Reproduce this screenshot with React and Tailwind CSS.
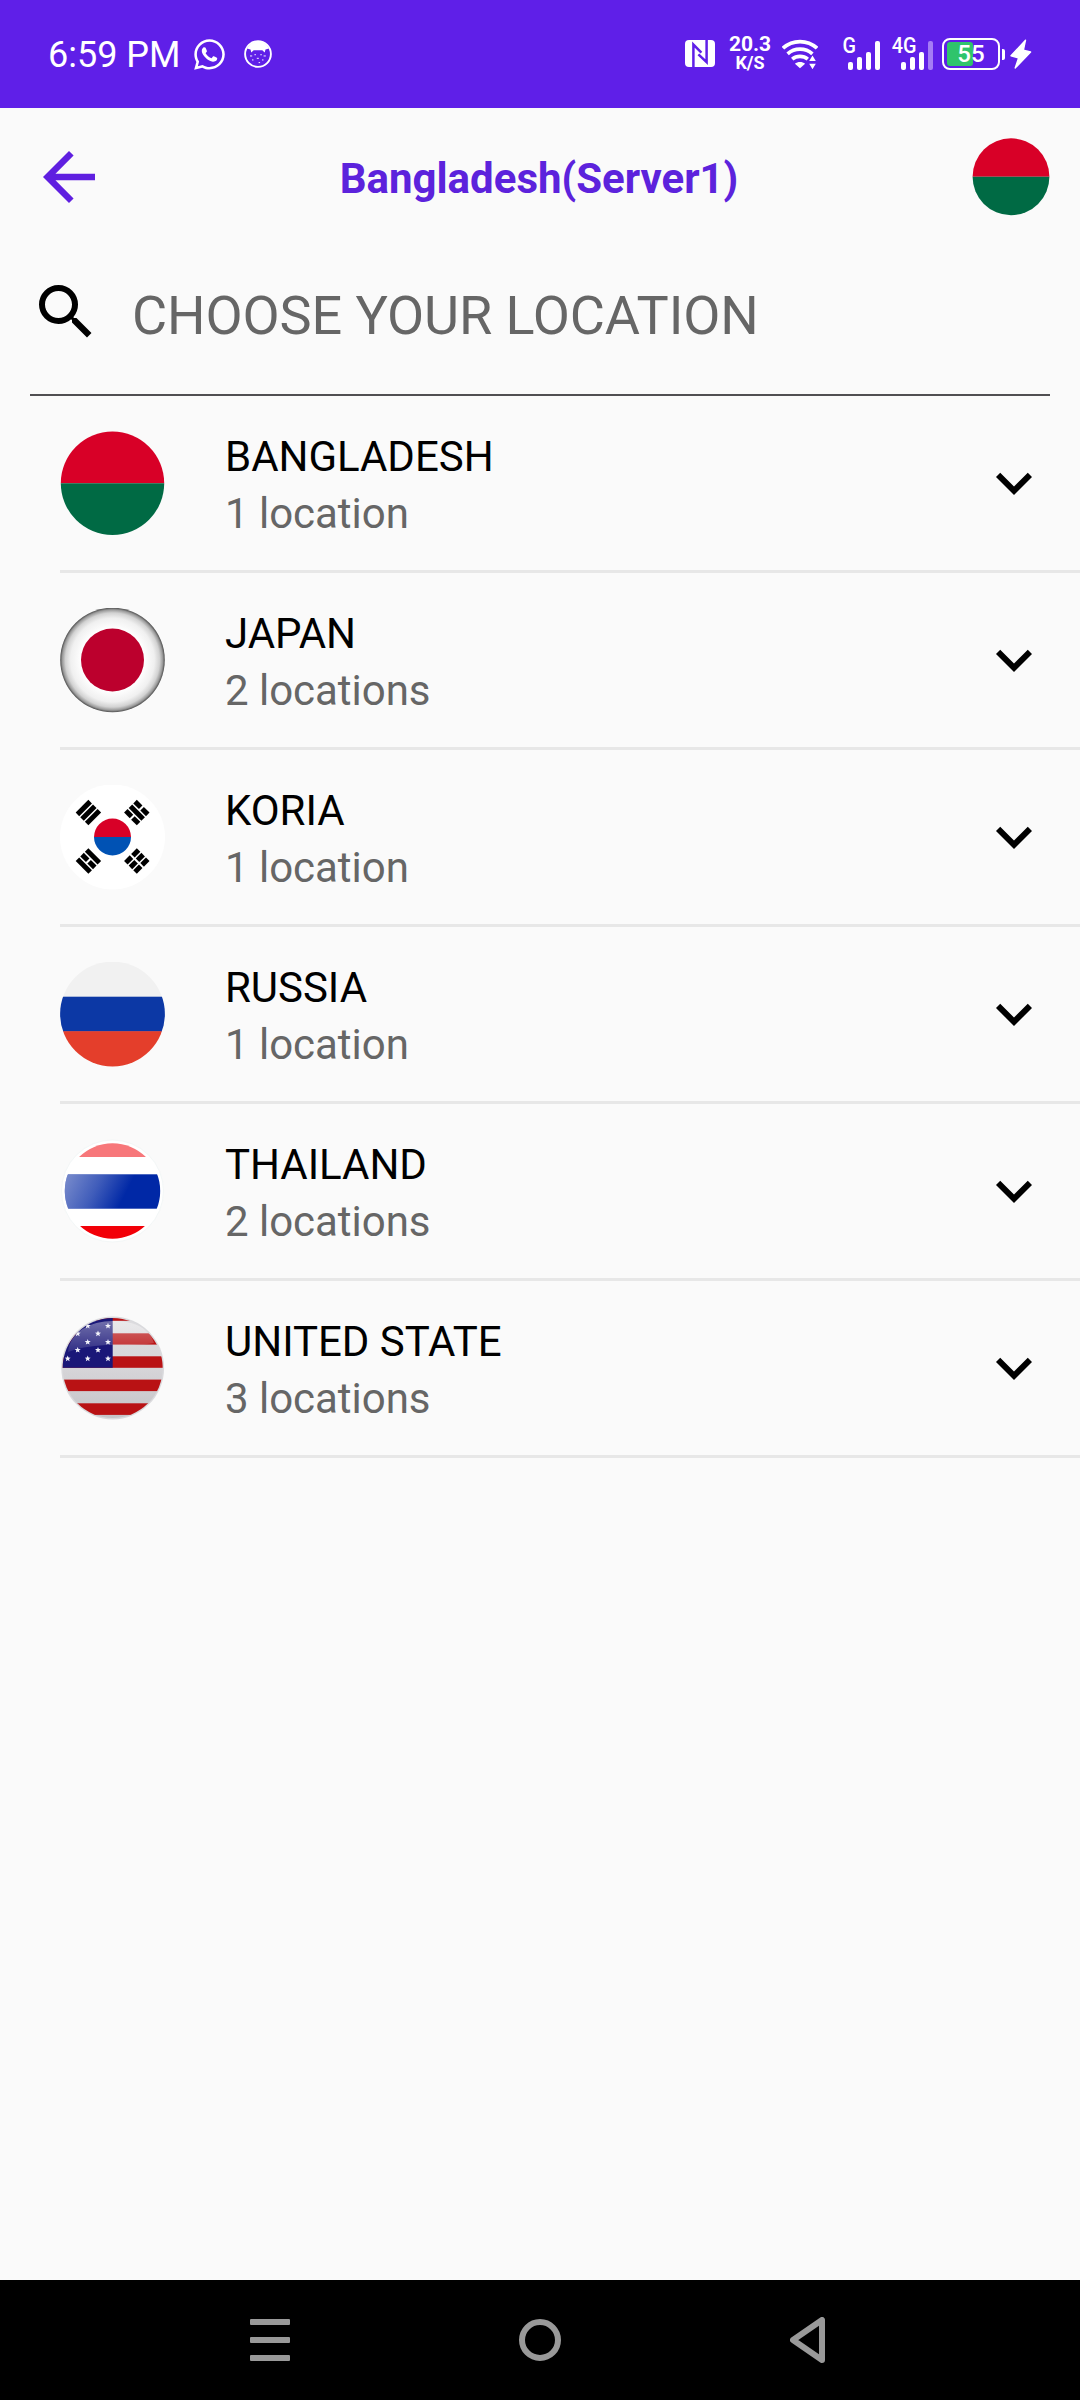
import { useState } from "react";
import { FaWhatsapp } from "react-icons/fa";
import { MdArrowBack, MdExpandMore, MdSearch } from "react-icons/md";

const servers = [
  { id: 1, country: "BANGLADESH", count: 1, Flag: BangladeshFlag },
  { id: 2, country: "JAPAN", count: 2, Flag: JapanFlag },
  { id: 3, country: "KORIA", count: 1, Flag: KoreaFlag },
  { id: 4, country: "RUSSIA", count: 1, Flag: RussiaFlag },
  { id: 5, country: "THAILAND", count: 2, Flag: ThailandFlag },
  { id: 6, country: "UNITED STATE", count: 3, Flag: UsaFlag },
];

function BangladeshFlag({ className }) {
  return (
    <svg viewBox="0 0 105 105" className={className}>
      <path d="M0.8 52.2a51.7 51.7 0 0 1 103.4 0z" fill="#d80027" />
      <path d="M0.8 52.2a51.7 51.7 0 0 0 103.4 0z" fill="#006a44" />
    </svg>
  );
}

function JapanFlag({ className }) {
  return (
    <svg viewBox="0 0 105 105" className={className}>
      <defs>
        <radialGradient id="jp-rim">
          <stop offset="0.62" stopColor="#fdfdfd" />
          <stop offset="0.8" stopColor="#f0f0f0" />
          <stop offset="0.9" stopColor="#d2d2d2" />
          <stop offset="0.96" stopColor="#9a9a9a" />
          <stop offset="1" stopColor="#4c4c4c" />
        </radialGradient>
      </defs>
      <circle cx="52.5" cy="52" r="52.3" fill="url(#jp-rim)" />
      <circle cx="52.5" cy="52" r="31.5" fill="#bc002d" />
    </svg>
  );
}

// bars go from the outer one to the inner one, true = solid
function Trigram({ x, y, angle, bars }) {
  return (
    <g transform={`translate(${x} ${y}) rotate(${angle})`}>
      {bars.map((solid, i) => {
        const top = -9 + i * 6.5;
        return solid ? (
          <rect key={i} x="-9" y={top} width="18" height="5" />
        ) : (
          <g key={i}>
            <rect x="-9" y={top} width="8" height="5" />
            <rect x="1" y={top} width="8" height="5" />
          </g>
        );
      })}
    </g>
  );
}

function KoreaFlag({ className }) {
  return (
    <svg viewBox="0 0 105 105" className={className}>
      <circle cx="52.5" cy="52" r="52.5" fill="#fff" />
      <path d="M34 52a18.5 18.5 0 0 1 37 0z" fill="#d80027" />
      <path d="M34 52a18.5 18.5 0 0 0 37 0z" fill="#0052b4" />
      <Trigram x={28.4} y={27.6} angle={-45} bars={[true, true, true]} />
      <Trigram x={76.8} y={27.6} angle={45} bars={[false, true, false]} />
      <Trigram x={28.4} y={76} angle={-135} bars={[true, false, true]} />
      <Trigram x={76.8} y={76} angle={135} bars={[false, false, false]} />
    </svg>
  );
}

function RussiaFlag({ className }) {
  return (
    <svg viewBox="0 0 105 105" className={className}>
      <clipPath id="ru-clip">
        <circle cx="52.5" cy="52" r="52.4" />
      </clipPath>
      <g clipPath="url(#ru-clip)">
        <rect width="105" height="35" fill="#f1f1f1" />
        <rect y="34.7" width="105" height="35" fill="#0c38a5" />
        <rect y="69.2" width="105" height="36" fill="#e43e2b" />
      </g>
    </svg>
  );
}

function ThailandFlag({ className }) {
  return (
    <svg viewBox="0 0 105 105" className={className}>
      <defs>
        <clipPath id="th-clip">
          <circle cx="52.5" cy="52" r="47.7" />
        </clipPath>
        <linearGradient id="th-shine" gradientUnits="userSpaceOnUse" x1="10" y1="36" x2="62" y2="62">
          <stop offset="0" stopColor="#e4e4ee" stopOpacity="0.5" />
          <stop offset="0.5" stopColor="#e4e4ee" stopOpacity="0.28" />
          <stop offset="1" stopColor="#e4e4ee" stopOpacity="0" />
        </linearGradient>
      </defs>
      <circle cx="52.5" cy="52" r="51" fill="#fff" stroke="#f3f7f7" />
      <g clipPath="url(#th-clip)">
        <rect width="105" height="18" fill="#f7777a" />
        <rect y="35.3" width="105" height="34.4" fill="#0028a6" />
        <rect y="35.3" width="105" height="34.4" fill="url(#th-shine)" />
        <rect y="87" width="105" height="18" fill="#f20008" />
      </g>
    </svg>
  );
}

const usStars = [
  [27.7, 9.9], [48, 9.9], [17.7, 17.6], [38, 17.6], [27.7, 26], [48, 26],
  [17.7, 34], [38, 34], [7.7, 42.6], [27.7, 42.6], [48, 42.6],
];

function UsaFlag({ className }) {
  return (
    <svg viewBox="0 0 105 105" className={className}>
      <defs>
        <clipPath id="us-clip">
          <circle cx="52.7" cy="52" r="50" />
        </clipPath>
        <linearGradient id="us-base" x1="0" y1="0" x2="0" y2="1">
          <stop offset="0" stopColor="#dddcdf" />
          <stop offset="0.5" stopColor="#d6d5d8" />
          <stop offset="1" stopColor="#c4c3c6" />
        </linearGradient>
        <linearGradient id="us-gloss" x1="0" y1="0" x2="0" y2="1">
          <stop offset="0" stopColor="#fff" stopOpacity="0.38" />
          <stop offset="1" stopColor="#fff" stopOpacity="0.1" />
        </linearGradient>
      </defs>
      <circle cx="52.7" cy="52" r="51.4" fill="#dadadd" />
      <g clipPath="url(#us-clip)">
        <rect width="105" height="105" fill="url(#us-base)" />
        <g fill="#b91214">
          <rect width="105" height="4.8" />
          <rect y="17.3" width="105" height="11.3" />
          <rect y="40.3" width="105" height="11.5" />
          <rect y="63.6" width="105" height="11.5" />
          <rect y="87.3" width="105" height="11.6" />
        </g>
        <rect width="52.7" height="51.8" fill="#1a1778" />
        <path d="M8 36C10 16 30 5 53 5s37 8 41 22c-12 2-28 2-42 2-16 0-30 2-44 7z" fill="url(#us-gloss)" />
        {usStars.map(([x, y]) => (
          <path
            key={`${x}-${y}`}
            transform={`translate(${x} ${y})`}
            d="M0-3.1.8-1 3-.9 1.3.5 1.9 2.6 0 1.4-1.9 2.6-1.3.5-3-.9-.8-1z"
            fill="#f2f2fa"
          />
        ))}
      </g>
    </svg>
  );
}

function CatIcon() {
  return (
    <svg viewBox="0 0 28 28" className="ml-[17px] size-7">
      <circle cx="14" cy="14" r="12.9" fill="none" stroke="#fff" strokeWidth="1.9" />
      <path d="M3 8.5C6 3 10 1.5 14 1.5S22 3 25 8.5L21.5 9.5l-.8 3-2.4-2.3h-8.6l-2.4 2.3-.8-3z" fill="#fff" />
      <g fill="#fff" opacity="0.85">
        <rect x="6" y="15.4" width="2.2" height="1.1" />
        <rect x="10.5" y="14" width="1.3" height="1.3" />
        <rect x="16.4" y="14" width="1.3" height="1.3" />
        <rect x="19.6" y="15.4" width="2.2" height="1.1" />
        <rect x="12.8" y="17.8" width="2" height="1.1" />
        <rect x="8" y="19.4" width="1.5" height="1.1" />
        <rect x="18" y="19.4" width="1.5" height="1.1" />
        <rect x="14.6" y="22" width="1.5" height="1.1" />
      </g>
    </svg>
  );
}

function NfcIcon() {
  return (
    <svg viewBox="0 0 30 27" className="mt-[40px] h-[27px] w-[30px]">
      <rect width="30" height="27" rx="4" fill="#fff" />
      <g fill="none" stroke="#5f1fe8" strokeWidth="2.5">
        <path d="M8.4 27V4.6L16.4 12.6" />
        <path d="M21.6 0v22.2L13.4 14.4" />
      </g>
    </svg>
  );
}

function WifiIcon() {
  return (
    <svg viewBox="0 0 36 30" className="ml-[12px] mt-[39px] h-[30px] w-9">
      <g fill="none" stroke="#fff" strokeWidth="3.7">
        <path d="M1 9.2C10.5.3 25.5.3 35 9.2" />
        <path d="M5.6 14.8c7-6.2 17.8-6.2 24.8 0" />
        <path d="M10.2 20.2c4.5-3.8 11.1-3.8 15.6 0" />
      </g>
      <path d="M18 29.3l-5.1-4.6c2.7-2.3 7.5-2.3 10.2 0z" fill="#fff" />
      <path d="M30.5 16.4l3.3 5.6h-6.6z M30.5 30.2l3.3-5.4h-6.6z" fill="#fff" />
    </svg>
  );
}

function Signal({ label, strength, className, labelClass }) {
  const heights = [8, 13, 18, 29];
  return (
    <div className={`relative mt-[41px] flex h-[29px] items-end gap-1 ${className}`}>
      <span
        className={`absolute -top-[8px] origin-right scale-x-90 text-[22px] leading-[26px] font-medium ${labelClass}`}
      >
        {label}
      </span>
      {heights.map((h, i) => (
        <span
          key={h}
          className={`w-[5px] rounded-[2px] ${i < strength ? "bg-white" : "bg-[#a57cf5]"}`}
          style={{ height: h }}
        />
      ))}
    </div>
  );
}

function Battery({ level }) {
  return (
    <div className="mt-[38px] ml-[9px] flex h-8 items-center">
      <div className="relative flex h-8 w-[58px] items-center rounded-[8px] border-2 border-white pl-[3px]">
        <div className="h-6 w-[26px] rounded-[3px] bg-[#2fc46c]" />
        <span className="absolute inset-0 text-center text-[24px] leading-[29px] font-medium">{level}</span>
      </div>
      <div className="ml-[2px] h-[11px] w-[3px] rounded-r-[2px] bg-white" />
      <svg viewBox="0 0 22 31" className="ml-[5px] h-[31px] w-[22px]">
        <path
          d="M15.5 1.2 1 16.8l7.6 2.2-3.4 10L20.6 13l-7.2-1.8z"
          fill="#fff"
          stroke="#fff"
          strokeWidth="1.4"
          strokeLinejoin="round"
        />
      </svg>
    </div>
  );
}

function StatusBar() {
  return (
    <div className="flex h-[108px] justify-between bg-[#5f1fe8] pr-12 pl-12 text-white">
      <div className="flex h-[108px] items-center">
        <span className="mt-[3px] text-[36px] leading-[43px]">6:59 PM</span>
        <FaWhatsapp className="ml-[11px] size-[35px]" />
        <CatIcon />
      </div>
      <div className="flex items-start">
        <NfcIcon />
        <div className="mt-[34px] ml-[15px] flex w-10 flex-col items-center">
          <span className="text-[21px] leading-[20px] font-bold">20.3</span>
          <span className="text-[18px] leading-[18px] font-bold">K/S</span>
        </div>
        <WifiIcon />
        <Signal label="G" strength={4} className="ml-[30px]" labelClass="right-[24px]" />
        <Signal label="4G" strength={3} className="ml-[21px]" labelClass="right-[17px]" />
        <Battery level={55} />
      </div>
    </div>
  );
}

function LocationRow({ country, count, Flag }) {
  return (
    <li className="ml-[60px] flex h-[177px] items-center border-b-[3px] border-[#e7e7e7] pr-[30px]">
      <Flag className="size-[105px] shrink-0" />
      <div className="mt-1 ml-[60px] flex-1 text-[42px] leading-[57px] tracking-[-0.03px]">
        <p className="text-black">{country}</p>
        <p className="text-[#666]">
          {count} {count > 1 ? "locations" : "location"}
        </p>
      </div>
      <MdExpandMore className="size-[72px] text-black" />
    </li>
  );
}

function NavBar() {
  return (
    <div className="flex h-[120px] items-center justify-between bg-black pr-[255px] pl-[250px]">
      <div className="flex w-10 flex-col gap-3">
        <span className="h-[6px] rounded-[1px] bg-[#999]" />
        <span className="h-[6px] rounded-[1px] bg-[#999]" />
        <span className="h-[6px] rounded-[1px] bg-[#999]" />
      </div>
      <div className="size-[42px] rounded-full border-[6px] border-[#999]" />
      <svg viewBox="0 0 35 46" className="h-[46px] w-[35px]">
        <path d="M32 3v40L3 23z" fill="none" stroke="#999" strokeWidth="6" strokeLinejoin="round" />
      </svg>
    </div>
  );
}

export default function App() {
  const [query, setQuery] = useState("");

  const filtered = servers.filter((s) => s.country.toLowerCase().includes(query.toLowerCase()));

  return (
    <div className="flex h-[2400px] w-[1080px] flex-col bg-[#fafafa] font-[Roboto,sans-serif]">
      <StatusBar />

      <header className="flex h-[138px] items-center justify-between pr-[30px] pl-[30px]">
        <MdArrowBack className="size-[78px] text-[#5f1fe0]" />
        <h1 className="mt-[2px] mr-[2px] text-[42px] font-bold text-[#5c22dc]">Bangladesh(Server1)</h1>
        <BangladeshFlag className="size-[78px]" />
      </header>

      <div className="mx-[30px] flex h-[150px] items-center border-b-2 border-[#504f52] pb-[16px]">
        <MdSearch className="size-[72px] text-black" />
        <input
          value={query}
          onChange={(e) => setQuery(e.target.value)}
          placeholder="CHOOSE YOUR LOCATION"
          className="mt-[6px] ml-[30px] flex-1 bg-transparent text-[54px] tracking-[-0.1px] text-black outline-none placeholder:text-[#666]"
        />
      </div>

      <ul className="flex-1">
        {filtered.map((s) => (
          <LocationRow key={s.id} country={s.country} count={s.count} Flag={s.Flag} />
        ))}
      </ul>

      <NavBar />
    </div>
  );
}
